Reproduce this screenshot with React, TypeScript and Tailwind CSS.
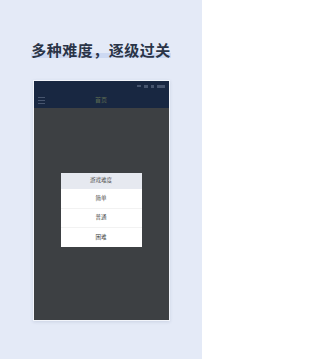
const font = { fontFamily: '"Noto Sans CJK SC", "Noto Sans", sans-serif' }

function StatusIcons() {
  return (
    <div className="flex items-center gap-[3px] opacity-40">
      <span className="h-[2px] w-[4px] bg-[#8d9bb3]" />
      <span className="h-[3px] w-[4px] bg-[#8d9bb3]" />
      <span className="h-[3px] w-[3px] bg-[#8d9bb3]" />
      <span className="h-[3px] w-[8px] bg-[#8d9bb3]" />
    </div>
  )
}

export default function App() {
  return (
    <div className="flex h-[359px] w-[202px] flex-col items-center bg-[#e4eaf7]" style={font}>
      <div className="relative mt-[40px] flex h-[18px] items-center">
        <span className="absolute bottom-[0px] left-[0px] right-[0px] h-[5px] bg-[#cdd9f2]" />
        <span className="relative text-[15px] font-bold leading-none tracking-[0.5px] text-[#2a3447]">
          多种难度，逐级过关
        </span>
      </div>

      <div className="mt-[22px] flex h-[241px] w-[137px] flex-col border border-[#f2f5fb] shadow-[0_1px_3px_rgba(60,80,120,0.15)]">
        <div className="flex h-[10px] items-center justify-end bg-[#182741] pr-[4px]">
          <StatusIcons />
        </div>
        <div className="relative flex h-[17px] items-center justify-center bg-[#182741]">
          <div className="absolute left-[4px] top-[6px] flex flex-col gap-[2px] opacity-40">
            <span className="h-[1px] w-[7px] bg-[#8d9bb3]" />
            <span className="h-[1px] w-[7px] bg-[#8d9bb3]" />
            <span className="h-[1px] w-[7px] bg-[#8d9bb3]" />
          </div>
          <span className="text-[6px] leading-none text-[#5d6b52]">首页</span>
        </div>
        <div className="flex flex-1 flex-col items-center bg-[#3d4043]">
          <div className="mt-[65px] flex w-[81px] flex-col bg-white text-[5.5px] leading-none text-[#444]">
            <div className="flex h-[16px] items-center justify-center bg-[#e6e9f0] text-[#555]">游戏难度</div>
            <div className="flex h-[20px] items-center justify-center border-b border-[#f2f2f2]">简单</div>
            <div className="flex h-[19px] items-center justify-center border-b border-[#f2f2f2]">普通</div>
            <div className="flex h-[19px] items-center justify-center">困难</div>
          </div>
        </div>
      </div>
    </div>
  )
}
